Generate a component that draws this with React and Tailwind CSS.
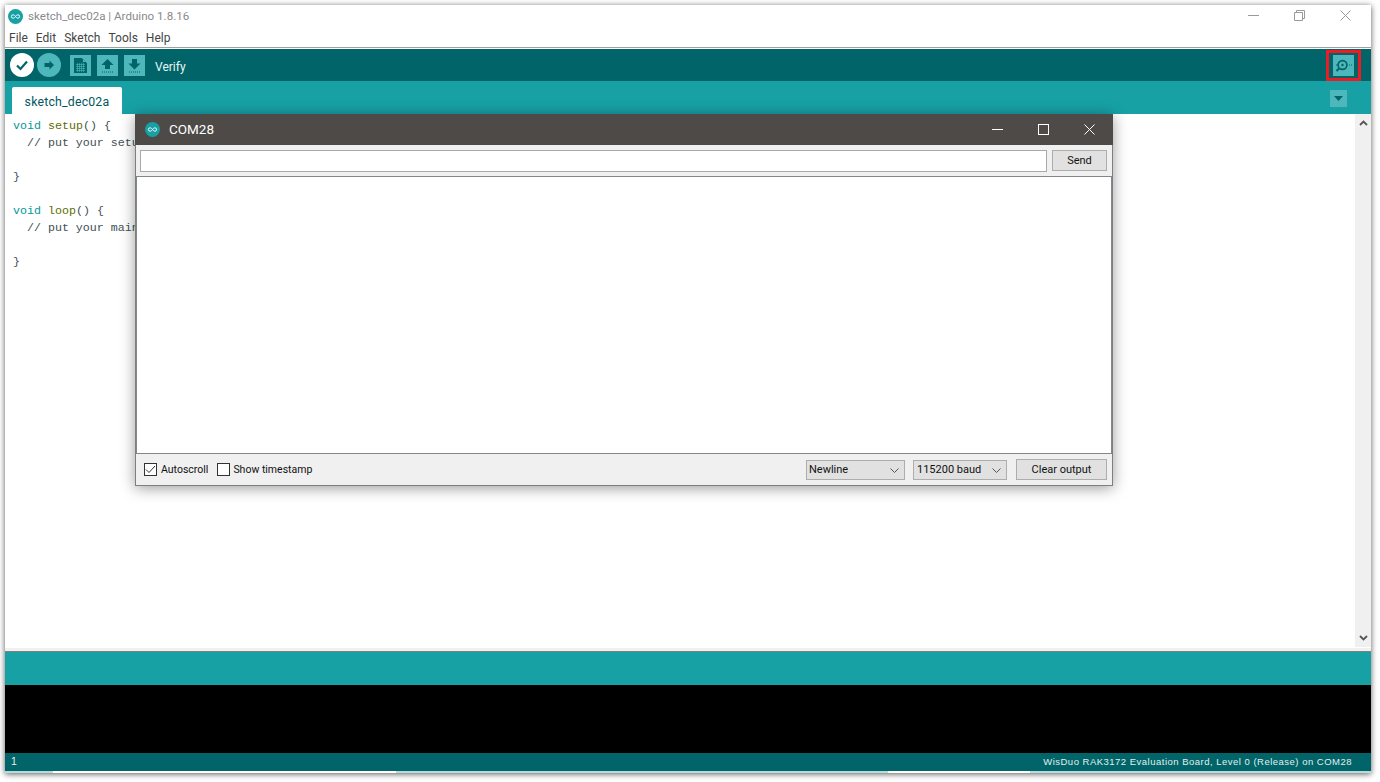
import React from "react";

const sans = "font-['Roboto','Noto_Sans',sans-serif]";

function Logo({ size = 15 }) {
  return (
    <svg width={size} height={size} viewBox="0 0 16 16" className="shrink-0">
      <circle cx="8" cy="8" r="8" fill="#17a1a5" />
      <path d="M5.4 6.2a1.8 1.8 0 1 0 0 3.6c1.3 0 2-1 2.6-1.8.6-.8 1.3-1.8 2.6-1.8a1.8 1.8 0 1 1 0 3.6c-1.3 0-2-1-2.6-1.8-.6-.8-1.3-1.8-2.6-1.8z" fill="none" stroke="#fff" strokeWidth="1" />
    </svg>
  );
}

function SquareBtn({ children, className = "" }) {
  return <div className={`w-[21px] h-[21px] bg-[#4db7bb] flex items-center justify-center ${className}`}>{children}</div>;
}

function CodeLine({ children }) {
  return <div className="h-[17px] leading-[17px] whitespace-pre">{children || " "}</div>;
}
const K = ({ children }) => <span className="text-[#00979c]">{children}</span>;
const F = ({ children }) => <span className="text-[#5e6d03]">{children}</span>;
const B = ({ children }) => <span className="text-[#434f54]">{children}</span>;
const C = ({ children }) => <span className="text-[#434f54]">{children}</span>;

function Chevron() {
  return (
    <svg width="9" height="5" viewBox="0 0 9 5" className="shrink-0">
      <path d="M.5.5l4 4 4-4" fill="none" stroke="#555" strokeWidth="1" />
    </svg>
  );
}

function SerialMonitor() {
  return (
    <div className={`absolute left-[135px] top-[114px] w-[978px] h-[372px] bg-[#f0f0f0] flex flex-col border border-[#7f7f7f] border-t-0 shadow-[0_2px_14px_rgba(0,0,0,0.4)] ${sans}`}>
      <div className="h-[31px] bg-[#4d4a48] flex items-center shrink-0 -mx-px">
        <div className="ml-[10px]"><Logo size={15} /></div>
        <span className="ml-[9px] text-white text-[13.5px] leading-none">COM28</span>
        <div className="ml-auto flex items-center">
          <svg width="11" height="11" viewBox="0 0 11 11" className="mr-[35px]"><path d="M0 5.5h11" stroke="#fff" strokeWidth="1" /></svg>
          <svg width="11" height="11" viewBox="0 0 11 11" className="mr-[35px]"><rect x=".5" y=".5" width="10" height="10" fill="none" stroke="#fff" /></svg>
          <svg width="11" height="11" viewBox="0 0 11 11" className="mr-[18px]"><path d="M.5.5l10 10M10.5.5l-10 10" stroke="#fff" strokeWidth="1" /></svg>
        </div>
      </div>
      <div className="h-[31px] flex items-center pl-[4px] gap-[5px] shrink-0">
        <div className="w-[907px] h-[22px] bg-white border border-[#a9a9a9]" />
        <div className="w-[55px] h-[21px] pt-[1px] bg-[#e1e1e1] border border-[#adadad] flex items-center justify-center text-[11px] text-[#111]">Send</div>
      </div>
      <div className="h-[278px] bg-white border border-[#82878c] shrink-0" />
      <div className="flex-1 flex items-center pl-[8px] text-[11px] text-[#111]">
        <div className="w-[13px] h-[13px] border border-[#333] bg-white flex items-center justify-center">
          <svg width="11" height="9" viewBox="0 0 11 9"><path d="M1 4.5l3 3 6-6.5" fill="none" stroke="#333" strokeWidth="1" /></svg>
        </div>
        <span className="ml-[4px] mt-[1px] text-[10.5px]">Autoscroll</span>
        <div className="ml-[9px] w-[13px] h-[13px] border border-[#333] bg-white" />
        <span className="ml-[3px] mt-[1px] text-[10.5px]">Show timestamp</span>
        <div className="ml-auto w-[99px] h-[20px] pt-[1px] bg-[#e1e1e1] border border-[#adadad] flex items-center pl-[2px] pr-[5px] justify-between">
          <span>Newline</span><Chevron />
        </div>
        <div className="ml-[8px] w-[94px] h-[20px] pt-[1px] bg-[#e1e1e1] border border-[#adadad] flex items-center pl-[3px] pr-[5px] justify-between">
          <span>115200 baud</span><Chevron />
        </div>
        <div className="ml-[9px] mr-[5px] w-[91px] h-[21px] pt-[1px] bg-[#e1e1e1] border border-[#adadad] flex items-center justify-center">Clear output</div>
      </div>
    </div>
  );
}

export default function App() {
  return (
    <div className="w-[1380px] h-[782px] bg-white pl-[5px] pt-[5px] overflow-hidden">
      <div className="w-[1366px] h-[768px] flex flex-col bg-white shadow-[0_1px_6px_rgba(0,0,0,0.65)]">
        <div className={`h-[23px] flex items-center shrink-0 pl-[3px] ${sans}`}>
          <Logo size={15} />
          <span className="ml-[5px] mt-[1px] text-[11.6px] text-[#8a8a8a] leading-none">sketch_dec02a | Arduino 1.8.16</span>
          <div className="ml-auto flex items-center mb-[2px]">
            <svg width="11" height="11" viewBox="0 0 11 11" className="mr-[35px]"><path d="M0 5.5h11" stroke="#999" /></svg>
            <svg width="11" height="11" viewBox="0 0 11 11" className="mr-[35px]"><path d="M.5 2.5h8v8h-8zM2.5 2.5v-2h8v8h-2" fill="none" stroke="#999" /></svg>
            <svg width="11" height="11" viewBox="0 0 11 11" className="mr-[20px]"><path d="M.5.5l10 10M10.5.5l-10 10" stroke="#999" /></svg>
          </div>
        </div>
        <div className={`h-[19px] flex items-center shrink-0 pl-[4px] gap-[8px] text-[12px] text-[#444] leading-none ${sans}`}>
          <span>File</span><span>Edit</span><span>Sketch</span><span>Tools</span><span>Help</span>
        </div>
        <div className="h-[2px] shrink-0 bg-white border-t border-[#a0a0a0]" />
        <div className="h-[32px] bg-[#006468] flex items-center shrink-0 pl-[5px]">
          <div className="w-[24px] h-[24px] rounded-full bg-white flex items-center justify-center">
            <svg width="14" height="12" viewBox="0 0 14 12"><path d="M2 6.5l3.5 3.5L12 2.5" fill="none" stroke="#006468" strokeWidth="2.2" /></svg>
          </div>
          <div className="ml-[3px] w-[24px] h-[24px] rounded-full bg-[#4db7bb] flex items-center justify-center">
            <svg width="12" height="12" viewBox="0 0 12 12"><path d="M6.5 1.5L11 6l-4.500 4.500V8H1.500V4h5z" fill="#006468" /></svg>
          </div>
          <SquareBtn className="ml-[9px]">
            <svg width="13" height="15" viewBox="0 0 13 15"><path d="M0 0h8l5 5v10H0z" fill="#006468" /><path d="M8 0l5 5H8z" fill="#4db7bb" /><path d="M8.500 1v3.500H12" fill="none" stroke="#006468" /><path d="M2 6.500h9M2 8.500h9M2 10.500h9M2 12.500h9M3.500 5v9M5.500 5v9M7.500 5v9M9.500 5v9" stroke="#4db7bb" strokeWidth=".6" /></svg>
          </SquareBtn>
          <SquareBtn className="ml-[6px]">
            <svg width="13" height="15" viewBox="0 0 13 15"><path d="M6.500 1L12.500 7H9v4H4V7H.5z" fill="#006468" /><path d="M1 14h11" stroke="#006468" strokeDasharray="1 1" /></svg>
          </SquareBtn>
          <SquareBtn className="ml-[6px]">
            <svg width="13" height="15" viewBox="0 0 13 15"><path d="M6.500 11.500L12.500 5.500H9V1H4v4.500H.5z" fill="#006468" /><path d="M1 14h11" stroke="#006468" strokeDasharray="1 1" /></svg>
          </SquareBtn>
          <span className={`ml-[10px] mt-[4px] text-[12px] text-[#e8f6f6] ${sans}`}>Verify</span>
          <div className="ml-auto mr-[10px] w-[35px] h-[31px] border-[3px] border-[#ed1c24] flex items-center justify-center">
            <div className="w-[21px] h-[21px] bg-[#4db7bb]">
              <svg width="21" height="21" viewBox="0 0 21 21"><circle cx="9.500" cy="10" r="4.400" fill="none" stroke="#006468" strokeWidth="1.700" /><circle cx="9.500" cy="10" r="1.200" fill="#006468" /><path d="M6 13.500L3.500 16" stroke="#006468" strokeWidth="2.200" /><path d="M3 10h1.500M16 10h1M18 10h1" stroke="#006468" /></svg>
            </div>
          </div>
        </div>
        <div className="h-[33px] bg-[#17a1a5] flex items-end shrink-0 pl-[7px]">
          <div className={`w-[110px] h-[27px] pt-[3px] bg-white rounded-t-[2px] flex items-center justify-center text-[12.3px] tracking-[0.2px] text-[#00585c] ${sans}`}>sketch_dec02a</div>
          <div className="ml-auto mr-[24px] mb-[7px] w-[17px] h-[17px] bg-[#4db7bb] flex items-center justify-center">
            <svg width="9" height="5" viewBox="0 0 9 5"><path d="M0 0h9L4.500 5z" fill="#006468" /></svg>
          </div>
        </div>
        <div className="flex-1 flex min-h-0 bg-white">
          <div className="flex-1 pl-[8px] pt-[3px] text-[11.650px] font-['Liberation_Mono',monospace] text-[#333]">
            <CodeLine><K>void</K> <F>setup</F><B>()</B> <B>{"{"}</B></CodeLine>
            <CodeLine><C>  // put your setup code here, to run once:</C></CodeLine>
            <CodeLine />
            <CodeLine><B>{"}"}</B></CodeLine>
            <CodeLine />
            <CodeLine><K>void</K> <F>loop</F><B>()</B> <B>{"{"}</B></CodeLine>
            <CodeLine><C>  // put your main code here, to run repeatedly:</C></CodeLine>
            <CodeLine />
            <CodeLine><B>{"}"}</B></CodeLine>
          </div>
          <div className="w-[16px] mb-[1px] bg-[#f0f0f0] flex flex-col justify-between items-center pt-[6px] pb-[6px] shrink-0">
            <svg width="9" height="6" viewBox="0 0 9 6"><path d="M1 5l3.500-3.500L8 5" fill="none" stroke="#555" strokeWidth="1.800" /></svg>
            <svg width="9" height="6" viewBox="0 0 9 6"><path d="M1 1l3.500 3.500L8 1" fill="none" stroke="#555" strokeWidth="1.800" /></svg>
          </div>
        </div>
        <div className="h-[4px] shrink-0 bg-[#f0f0f0] border-b border-[#808080]" />
        <div className="h-[33px] bg-[#17a1a5] shrink-0" />
        <div className="h-[68px] bg-black shrink-0" />
        <div className="h-[18px] bg-[#006468] shrink-0 flex items-center justify-between pl-[6px] pr-[19px] text-[9.500px] text-[#e0f0f0] font-['Liberation_Sans',sans-serif] tracking-[0.49px]">
          <span className="text-[10.500px]">1</span>
          <span>WisDuo RAK3172 Evaluation Board, Level 0 (Release) on COM28</span>
        </div>
        <div className="h-[2px] shrink-0 flex bg-[#b5dcdc]">
          <div className="w-[48px]" />
          <div className="w-[343px] bg-white" />
          <div className="w-[492px]" />
          <div className="w-[142px] bg-white" />
        </div>
      </div>
      <SerialMonitor />
    </div>
  );
}
